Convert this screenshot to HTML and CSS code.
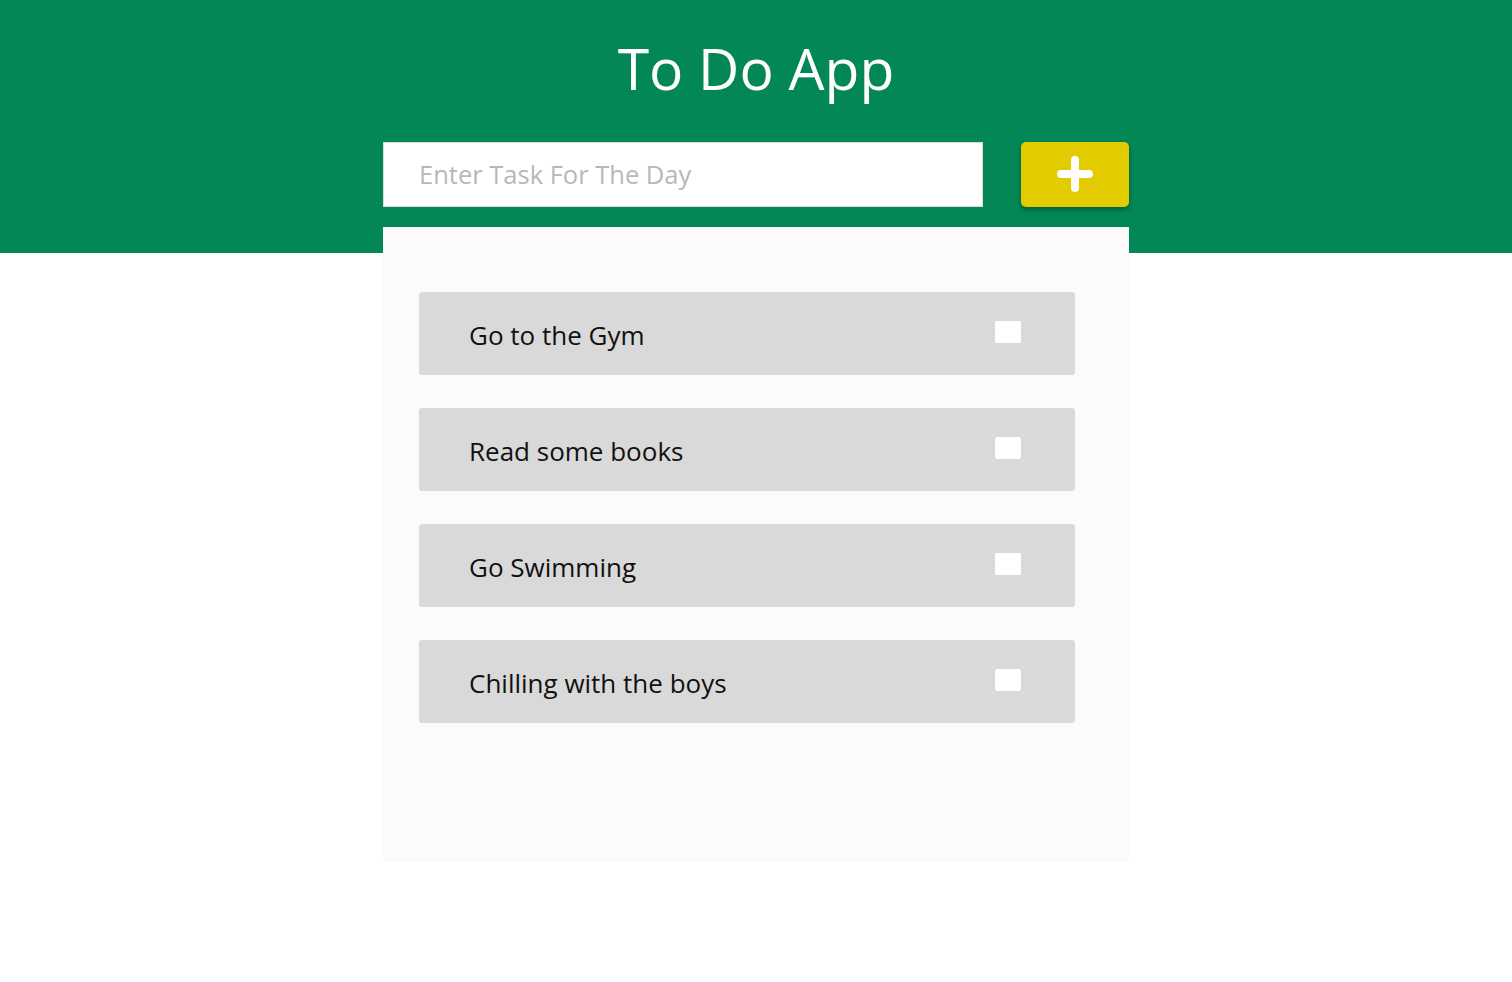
FILE: index.html
```html
<!DOCTYPE html>
<html lang="en">
<head>
<meta charset="utf-8">
<title>To Do App</title>
<link rel="stylesheet" href="styles.css">
</head>
<body>
<div class="app">
  <h1 class="title">To Do App</h1>
  <form class="add-row">
    <input class="task-input" type="text" placeholder="Enter Task For The Day">
    <button class="add-btn" type="button" aria-label="Add task">
      <svg width="36" height="36" viewBox="0 0 36 36"><path d="M18 4v28M4 18h28" stroke="#fff" stroke-width="8" stroke-linecap="round" fill="none"/></svg>
    </button>
  </form>
  <section class="panel">
    <div class="item"><span class="item-text">Go to the Gym</span><span class="check"></span></div>
    <div class="item"><span class="item-text">Read some books</span><span class="check"></span></div>
    <div class="item"><span class="item-text">Go Swimming</span><span class="check"></span></div>
    <div class="item"><span class="item-text">Chilling with the boys</span><span class="check"></span></div>
  </section>
</div>
</body>
</html>
```

FILE: styles.css
```css
html, body {
  margin: 0;
  padding: 0;
}
body {
  background: linear-gradient(#038756 0, #038756 253px, #ffffff 253px);
  font-family: "Open Sans", "Noto Sans", sans-serif;
  min-height: 982px;
}
.app {
  width: 746px;
  margin: 0 auto;
  display: flex;
  flex-direction: column;
}
.title {
  margin: 0;
  padding-top: 32px;
  height: 107px;
  box-sizing: border-box;
  line-height: 72px;
  font-size: 57px;
  font-weight: 400;
  color: #ffffff;
  text-align: center;
}
.add-row {
  display: flex;
  justify-content: space-between;
  margin: 0;
  padding-top: 35px;
}
.task-input {
  width: 600px;
  height: 65px;
  box-sizing: border-box;
  border: 1px solid #dcdcdc;
  padding: 0 0 2px 35px;
  font-family: inherit;
  font-size: 25.5px;
  color: #222;
  outline: none;
}
.task-input::placeholder {
  color: #b8b8b8;
}
.add-btn {
  width: 108px;
  height: 65px;
  border: none;
  border-radius: 5px;
  background: #e2cc00;
  box-shadow: 0 3px 5px rgba(0, 0, 0, 0.3);
  display: flex;
  align-items: center;
  justify-content: center;
  padding: 0 0 2px;
  cursor: pointer;
}
.panel {
  margin-top: 20px;
  height: 635px;
  box-sizing: border-box;
  background: #fcfafb;
  padding: 65px 54px 0 36px;
  display: flex;
  flex-direction: column;
  gap: 33px;
}
.item {
  height: 83px;
  background: #d9d9d9;
  border-radius: 3px;
  display: flex;
  align-items: center;
  justify-content: space-between;
  padding: 0 54px 0 50px;
}
.item-text {
  font-size: 26px;
  color: #111;
  padding-top: 2px;
}
.check {
  width: 26px;
  height: 22px;
  margin-bottom: 4px;
  background: #ffffff;
  border-radius: 2px;
}
```
